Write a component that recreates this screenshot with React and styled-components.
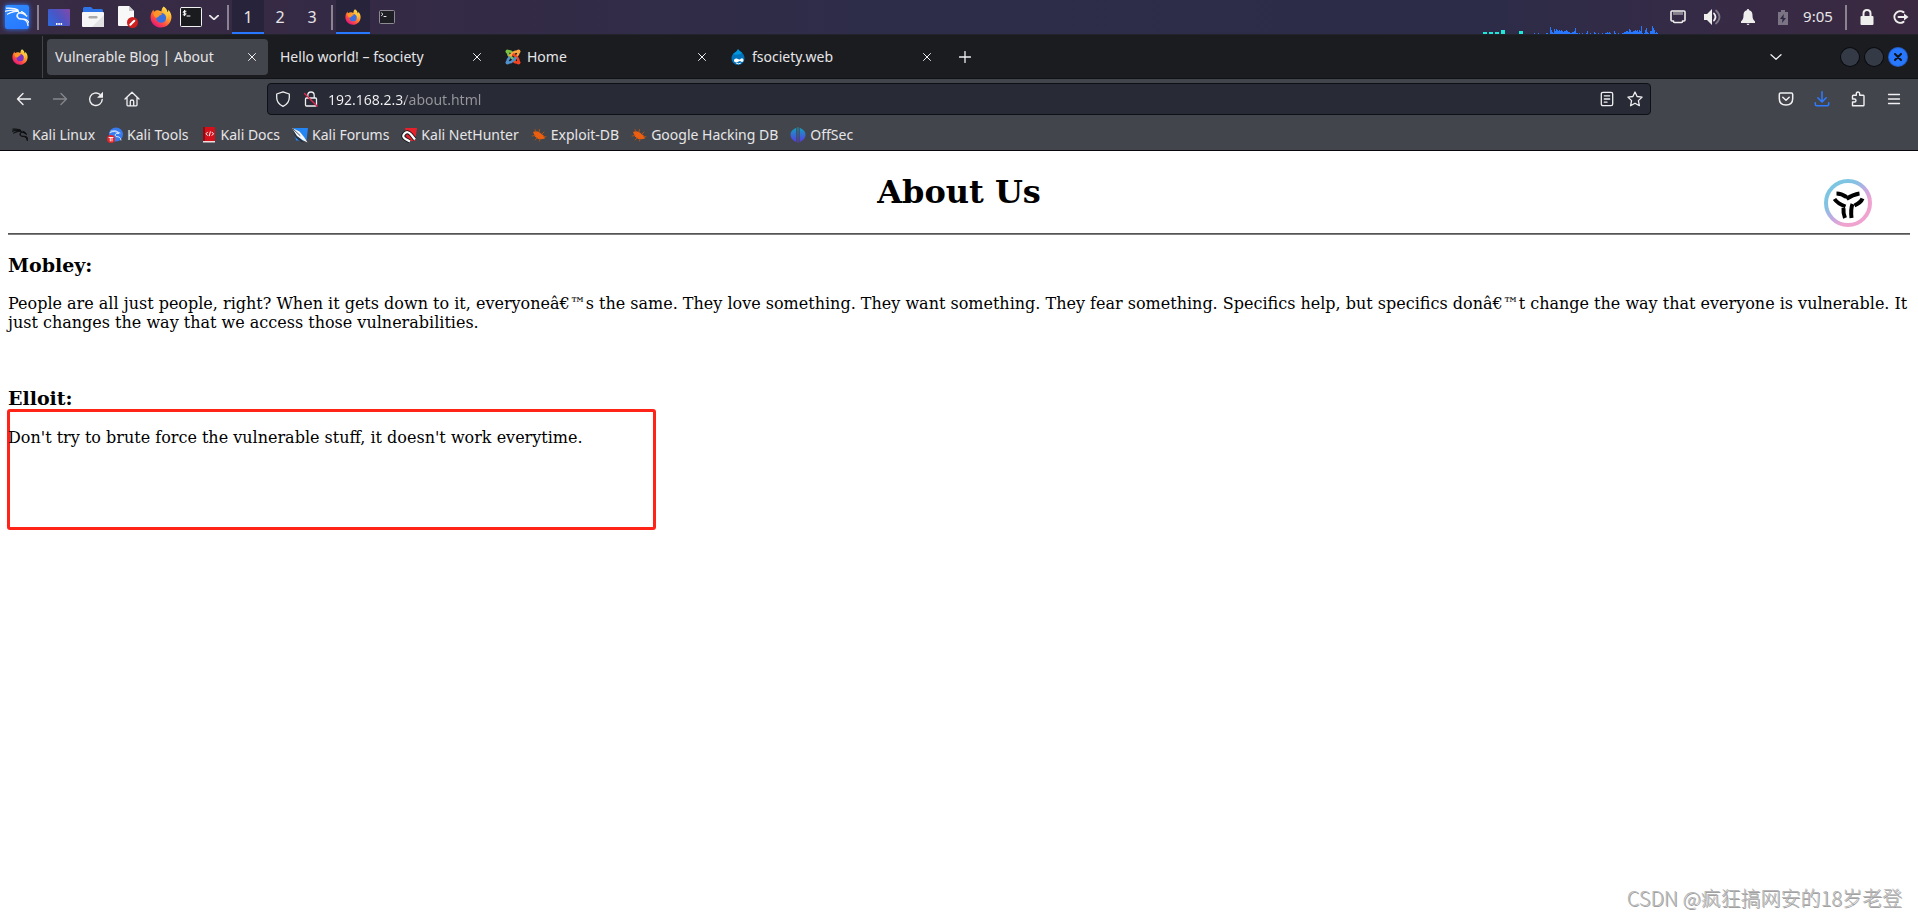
import styled, { createGlobalStyle } from 'styled-components';
import { SiKalilinux } from 'react-icons/si';

const GlobalStyle = createGlobalStyle`
  *, *::before, *::after {
    box-sizing: border-box;
  }
  body {
    margin: 0;
    background: #ffffff;
  }
  button {
    font: inherit;
    color: inherit;
    background: none;
    border: 0;
    padding: 0;
  }
`;

const Screen = styled.div`
  position: relative;
  display: flex;
  flex-direction: column;
  min-height: 100vh;
  font-family: 'Noto Sans', sans-serif;
  font-size: 14px;
  line-height: 20px;
  color: #e6e6e8;
`;

/* desktop panel */

const Panel = styled.header`
  display: flex;
  align-items: stretch;
  height: 35px;
  border-bottom: 1px solid #22232b;
  background: linear-gradient(90deg, #382b44 0%, #352a45 18%, #2d2d49 48%, #2d2c48 78%, #382a45 92%, #3a2940 100%);
`;

const PanelButton = styled.button`
  display: flex;
  align-items: center;
  justify-content: center;
  width: ${({ $width }) => $width || 34}px;
  font-size: 16px;
  background: ${({ $active }) => ($active ? '#27233a' : 'none')};
  box-shadow: ${({ $active }) => ($active ? 'inset 0 -2px 0 #2777ff' : 'none')};
`;

const MenuTile = styled.span`
  display: flex;
  align-items: center;
  justify-content: center;
  width: 24px;
  height: 24px;
  border-radius: 2px;
  color: #ffffff;
  background: linear-gradient(160deg, #2f8bff, #2777ff);
  box-shadow: 0 0 5px #2f7bff;
`;

const Separator = styled.span`
  width: 2px;
  margin: 5px 3px 4px;
  background: #8a8391;
`;

const Tray = styled.div`
  display: flex;
  margin-left: auto;
`;

const Clock = styled.time`
  width: 42px;
  padding-right: 6px;
  font-size: 15px;
  line-height: 33px;
  text-align: center;
`;

/* browser chrome */

const TabBar = styled.nav`
  display: flex;
  align-items: center;
  height: 44px;
  padding-top: 1px;
  border-bottom: 1px solid #111216;
  background: #1b1c20;
`;

const FirefoxView = styled.button`
  display: flex;
  align-items: center;
  align-self: stretch;
  width: 43px;
  padding-left: 12px;
  border-right: 1px solid #44454b;
`;

const TabList = styled.div`
  display: flex;
  gap: 4px;
  margin: 0 4px;
`;

const Tab = styled.div`
  display: flex;
  align-items: center;
  gap: 6px;
  width: 221px;
  height: 36px;
  padding: 0 6px 0 8px;
  border-radius: 4px;
  background: ${({ $active }) => ($active ? '#43454c' : 'none')};
`;

const TabTitle = styled.span`
  flex: 1;
  overflow: hidden;
  white-space: nowrap;
`;

const IconButton = styled.button`
  display: flex;
  flex: none;
  align-items: center;
  justify-content: center;
  width: ${({ $size }) => $size || 36}px;
  height: ${({ $size }) => $size || 36}px;
  color: ${({ $tone }) => $tone || '#f0f0f2'};
`;

const WindowControls = styled.div`
  display: flex;
  align-items: center;
  gap: 6px;
  margin-left: auto;
  padding-right: 11px;
`;

const AllTabs = styled(IconButton)`
  margin-right: 41px;
`;

const WindowButton = styled.button`
  display: flex;
  align-items: center;
  justify-content: center;
  width: 18px;
  height: 18px;
  border-radius: 50%;
  color: #10131c;
  background: ${({ $close }) => ($close ? '#2777ff' : '#343a46')};
  box-shadow: 0 0 0 1px ${({ $close }) => ($close ? '#2460cc' : '#0b0c0f')};
`;

const NavBar = styled.div`
  display: flex;
  align-items: center;
  height: 41px;
  padding: 0 6px 1px;
  background: #43454c;
`;

const UrlBar = styled.form`
  display: flex;
  flex: 1;
  align-items: center;
  height: 32px;
  margin: 0 117px;
  padding: 0 1px;
  border: 1px solid #0f1015;
  border-radius: 4px;
  background: #282a35;
`;

const UrlInput = styled.input`
  flex: 1;
  min-width: 0;
  height: 24px;
  padding: 0 0 0 3px;
  border: 0;
  outline: 0;
  font: inherit;
  color: transparent;
  background: linear-gradient(90deg, #f4f4f6 0 80px, #96979c 80px);
  background-clip: text;
`;

const Bookmarks = styled.nav`
  display: flex;
  align-items: center;
  gap: 12px;
  height: 31px;
  padding: 0 12px;
  border-bottom: 1px solid #08080a;
  background: #43454c;
`;

const Bookmark = styled.a`
  display: flex;
  align-items: center;
  gap: 4px;
  color: inherit;
  text-decoration: none;
  white-space: nowrap;
`;

/* page */

const Page = styled.main`
  position: relative;
  flex: 1;
  padding: 22px 8px;
  font-family: 'DejaVu Serif', serif;
  font-size: 16px;
  line-height: 19px;
  color: #000000;
`;

const PageTitle = styled.h1`
  margin: 0 0 22px;
  font-size: 32px;
  line-height: 38px;
  text-align: center;
`;

const Rule = styled.hr`
  margin: 0;
  border: 0;
  border-top: 1px solid #555555;
  border-bottom: 1px solid #808080;
`;

const Speaker = styled.h2`
  margin: 19px 0 0;
  font-size: 19px;
  line-height: 22px;
`;

const Quote = styled.p`
  margin: 18px 0 55px;
`;

const Marked = styled.div`
  width: 649px;
  max-width: 100%;
  min-height: 121px;
  margin-left: -1px;
  padding: 1px;
  border-radius: 3px;
  box-shadow: inset 0 0 0 3px #ff2318;
`;

const FloatingButton = styled.button`
  position: absolute;
  top: 28px;
  right: 46px;
  width: 48px;
  height: 48px;
`;

const Watermark = styled.span`
  position: absolute;
  right: 16px;
  bottom: 6px;
  font-family: 'Noto Sans CJK SC', sans-serif;
  font-size: 20px;
  font-weight: 300;
  line-height: 28px;
  color: #b8b8b8;
  text-shadow: 1px 1px 0 #a0a0a0;
`;

const Svg = ({ size = 16, width, height, box = '0 0 16 16', children }) => (
  <svg
    width={width || size}
    height={height || size}
    viewBox={box}
    fill="none"
    stroke="none"
    strokeLinecap="round"
    strokeLinejoin="round"
    aria-hidden="true"
  >
    {children}
  </svg>
);

const Line = ({ d, w = 1.3, ...rest }) => <path d={d} stroke="currentColor" strokeWidth={w} {...rest} />;

const FirefoxIcon = ({ id, size, core = '#3b6fe0' }) => (
  <Svg size={size} box="0 0 24 24">
    <defs>
      <linearGradient id={id} x1="20" y1="3" x2="6" y2="22" gradientUnits="userSpaceOnUse">
        <stop offset="0" stopColor="#ffe44d" />
        <stop offset="0.4" stopColor="#ff9a2e" />
        <stop offset="0.72" stopColor="#ff4a42" />
        <stop offset="1" stopColor="#e3187b" />
      </linearGradient>
    </defs>
    <path
      d="M15 .5C18 2.5 19 5 19 6.5c1-.3 1-1.500 .8-2.500C22.500 6.500 23.600 9.500 23.400 12.600 23 19 18 23.500 12 23.500S1 19 .6 13C.4 9.500 1.600 6.500 3.800 3.800c0 1 .2 1.800.7 2.400C6 5 8 4.500 9.500 4.800L12.500 6C12.500 4 13.300 2 15 .5Z"
      fill={`url(#${id})`}
    />
    <circle cx="12.200" cy="13" r="5.400" fill={core} />
    <path d="M4 7c2.500-1.500 4.500-.5 6 .6 1.200 0 3 .2 3.200 1-.3 1-1.600 1.400-3 1.800-.4 1.500-1.900 2-3.200 2.500C4.500 12 3.500 9.500 4 7Z" fill="#ff9526" />
    <path d="M14.500 7c3.500 1.500 4.600 5 3.200 8.500 2.800-3.500 2.300-7-.7-10.500Z" fill="#ffc83a" />
  </Svg>
);

const DesktopIcon = () => (
  <Svg width={22} height={17} box="0 0 22 17">
    <defs>
      <linearGradient id="desk" x1="0" y1="17" x2="22" y2="0" gradientUnits="userSpaceOnUse">
        <stop offset="0" stopColor="#2b6be0" />
        <stop offset="0.5" stopColor="#4a55c4" />
        <stop offset="1" stopColor="#8348a8" />
      </linearGradient>
    </defs>
    <rect width="22" height="17" rx="1" fill="url(#desk)" />
    <path d="M8 14h1.500v2H8zM10.300 14h1.500v2h-1.500zM12.600 14h1.500v2h-1.500z" fill="#fff" />
  </Svg>
);

const FolderIcon = () => (
  <Svg width={22} height={20} box="0 0 22 20">
    <path d="M1 1.500Q1 0 2.500 0H9l2 2h8.500Q21 2 21 3.500V8H1Z" fill="#2f74e6" />
    <rect y="5" width="22" height="15" rx="1" fill="#f6f6f6" />
    <path d="M22 8v12H10Z" fill="#e2e2e4" />
    <rect x="6.500" y="9" width="9" height="2.500" rx="1.200" fill="#a9a9ac" />
  </Svg>
);

const EditorIcon = () => (
  <Svg width={22} height={22} box="0 0 22 22">
    <path d="M2 1Q2 0 3 0h10l5 5v15H3q-1 0-1-1Z" fill="#f8f8f8" />
    <path d="M13 0v5h5Z" fill="#c9c9cc" />
    <circle cx="16.500" cy="16.500" r="5.500" fill="#d01f1f" />
    <path d="m14.300 18.800 4-4" stroke="#fff" strokeWidth="2" />
  </Svg>
);

const TerminalIcon = () => (
  <Svg width={22} height={20} box="0 0 22 20">
    <rect x=".5" y=".5" width="21" height="19" rx="1" fill="#191b1e" stroke="#f1f1f1" />
    <path d="M6 4.300H4.200Q3.200 4.300 3.200 5.200T4.200 6h.9Q6 6 6 6.900T5 7.800H3.200M4.600 3.300v5.400M7 9h3" stroke="#fff" strokeWidth="1" />
  </Svg>
);

const SmallTerminalIcon = () => (
  <Svg width={16} height={14} box="0 0 16 14">
    <rect x=".5" y=".5" width="15" height="13" rx="1" fill="#1d1f24" stroke="#8e8a94" />
    <path d="M2.500 3 4 4.300 2.500 5.600M5 6.500h2" stroke="#e8e8e8" strokeWidth="1" />
  </Svg>
);

const ChevronDown = ({ width, w }) => (
  <Svg width={width} height={width / 2} box="0 0 12 6">
    <Line d="M1 .8 6 5.200 11 .8" w={w} />
  </Svg>
);

const EthernetIcon = () => (
  <Svg width={16} height={14} box="0 0 16 14">
    <path d="M2 1h12q1 0 1 1v8q0 1-1 1h-1.500v.5q0 1-1 1h-7q-1 0-1-1V11H2q-1 0-1-1V2q0-1 1-1Z" stroke="#eeeeec" strokeWidth="1.600" />
    <path d="M4 2v2.500M6 2v2.500M8 2v2.500M10 2v2.500M12 2v2.500" stroke="#eeeeec" strokeWidth=".9" />
  </Svg>
);

const VolumeIcon = () => (
  <Svg width={18} height={16} box="0 0 18 16">
    <path d="M0 5h3l5-5v16l-5-5H0Z" fill="#eeeeec" />
    <path d="M10 4.500q3 3.500 0 7" stroke="#eeeeec" strokeWidth="1.800" />
    <path d="M12 1.500q7 6.500 0 13" stroke="#7d7687" strokeWidth="1.800" />
  </Svg>
);

const BellIcon = () => (
  <Svg width={14} height={16} box="0 0 14 16">
    <path d="M7 0q1.200 0 1.200 1.300C11 2 11.500 4 11.500 6.500c0 3 .8 4.500 2.500 6V14H0v-1.500c1.700-1.500 2.500-3 2.500-6C2.500 4 3 2 5.800 1.300 5.800 0 7 0 7 0ZM5.500 14.700h3Q8 16 7 16t-1.500-1.300Z" fill="#eeeeec" />
  </Svg>
);

const BatteryIcon = () => (
  <Svg width={10} height={15} box="0 0 10 15">
    <path d="M0 2h3V0h4v2h3v13H0Z" fill="#7b7484" />
    <path d="M5.800 4 2 9h2.500L4 13l4-5H5.500Z" fill="#2f2843" />
  </Svg>
);

const LockIcon = () => (
  <Svg width={14} height={16} box="0 0 14 16">
    <path d="M3.500 8V4.500Q3.500 1 7 1t3.500 3.500V8" stroke="#eeeeec" strokeWidth="2" />
    <rect x=".5" y="7" width="13" height="9" rx="1" fill="#eeeeec" />
  </Svg>
);

const LogoutIcon = () => (
  <Svg width={16} height={14} box="0 0 16 14">
    <path d="M10.500 2.200A5.800 5.800 0 1 0 10.500 11.800" stroke="#eeeeec" strokeWidth="2" />
    <path d="M5.500 7H12" stroke="#eeeeec" strokeWidth="2" />
    <path d="m11 3.500 4.500 3.500L11 10.500Z" fill="#eeeeec" />
  </Svg>
);

const CPU_BARS = [
  [0, 2], [6, 2], [12, 2], [18, 4], [36, 3],
];
const NET_BARS = [
  1, 0, 0, 0, 1, 0, 0, 0, 0, 0, 0, 0, 1, 1, 0, 0, 7, 4, 2, 1, 5, 3, 5, 4, 3, 4, 3, 4, 3, 2, 3, 3, 4, 3, 2, 2, 1, 1,
  2, 2, 3, 6, 1, 1, 0, 1, 0, 0, 1, 0, 0, 0, 1, 3, 0, 0, 1, 0, 0, 0, 2, 1, 0, 0, 1, 0, 0, 0, 1, 0, 0, 1, 1, 2, 1, 2,
  1, 0, 0, 0, 3, 1, 0, 0, 1, 0, 0, 0, 1, 1, 2, 2, 3, 3, 2, 5, 4, 2, 2, 3, 3, 4, 3, 4, 2, 4, 3, 8, 1, 0, 1, 4, 6, 2,
  1, 0, 3, 3, 8, 6, 4, 1, 2, 1,
];

const LoadGraph = () => (
  <Svg width={177} height={34} box="0 0 177 34">
    {CPU_BARS.map(([x, h]) => (
      <rect key={x} x={x} y={34 - h} width="4" height={h} fill="#1ee8d8" />
    ))}
    {NET_BARS.map((h, i) => (
      <rect key={i} x={51 + i} y={34 - h} width="1" height={h} fill="#2777ff" />
    ))}
  </Svg>
);

const CloseIcon = () => (
  <Svg size={10} box="0 0 10 10">
    <Line d="m1.500 1.500 7 7M8.500 1.500l-7 7" w={1} />
  </Svg>
);

const JoomlaIcon = () => (
  <Svg>
    <g strokeWidth="2.500">
      <path d="M2.500 2.500 3.500 6 9.500 11" stroke="#7ac143" />
      <path d="M2.500 2.500Q6 1.500 8 5" stroke="#7ac143" />
      <path d="M13.500 2.500Q10 2 7.500 4.500L5 7" stroke="#f9a541" />
      <path d="M13.500 2.500Q14 5 11.500 7.500" stroke="#f9a541" />
      <path d="M13.500 13.500Q14 10.500 11.500 8L8.500 5.500" stroke="#f44321" />
      <path d="M13.500 13.500Q10.500 14 8.500 12" stroke="#f44321" />
      <path d="M2.500 13.500Q6 14 8 11.500L10.500 9" stroke="#5091cd" />
      <path d="M2.500 13.500Q2 11 4.500 8.500" stroke="#5091cd" />
    </g>
    <circle cx="2.500" cy="2.500" r="2" fill="#7ac143" />
    <circle cx="13.500" cy="2.500" r="2" fill="#f9a541" />
    <circle cx="13.500" cy="13.500" r="2" fill="#f44321" />
    <circle cx="2.500" cy="13.500" r="2" fill="#5091cd" />
  </Svg>
);

const DrupalIcon = () => (
  <Svg>
    <path d="M8 0c1 2 3 2.500 4.500 4.200C14 6 14.500 7.500 14.500 9.300A6.500 6.500 0 0 1 8 16 6.500 6.500 0 0 1 1.500 9.300C1.500 7 2.500 5.300 4.200 4 6 2.800 7.500 2 8 0Z" fill="#0073ba" />
    <path d="M8 0c1 2 3 2.500 4 3.700C10 6 5 6 3 5.200 5 3 7.500 2.500 8 0Z" fill="#0096dc" />
    <path d="M4 11.500C4 9.500 6 9 7.300 9.700 8.800 10.500 9.500 11 10.500 10c1.300-1.300 3-.5 3 1.200 0 1.600-1.500 2.200-2.600 1.300-1.100-.8-1.600-.6-2.700.3C6.500 14 4 13.500 4 11.500Z" fill="#fff" />
    <path d="M6.500 14.400q2 1 4-.1" stroke="#fff" strokeWidth=".9" />
  </Svg>
);

const BackIcon = () => (
  <Svg>
    <Line d="M1.500 8h13M7 2.500 1.500 8 7 13.500" w={1.400} />
  </Svg>
);

const ForwardIcon = () => (
  <Svg>
    <Line d="M1.500 8h13M9 2.500 14.500 8 9 13.500" w={1.400} />
  </Svg>
);

const ReloadIcon = () => (
  <Svg>
    <Line d="M14.200 8.500A6.300 6.300 0 1 1 11.800 3.300" w={1.400} />
    <path d="M15 .8v6H9Z" fill="currentColor" />
  </Svg>
);

const HomeIcon = () => (
  <Svg>
    <Line d="M1 8 8 1.200 15 8M3 6.500V14q0 .8.800.8h8.400q.8 0 .8-.8V6.500M6.300 14.500V10.300Q6.300 9 8 9t1.700 1.300v4.200" />
  </Svg>
);

const ShieldIcon = () => (
  <Svg>
    <Line d="M8 .8 14.300 3V6.500Q14.300 12.500 8 15.300 1.700 12.500 1.700 6.500V3Z" />
  </Svg>
);

const InsecureIcon = () => (
  <Svg>
    <Line d="M4.800 7V4.300Q4.800 1 8 1t3.200 3.300V7M3.500 7h9q1 0 1 1v6q0 1-1 1h-9q-1 0-1-1V8q0-1 1-1Z" />
    <path d="m1.500 2.500 12.500 12.500" stroke="#e22850" strokeWidth="1.400" />
  </Svg>
);

const ReaderIcon = () => (
  <Svg>
    <Line d="M4 1.300h8q1.700 0 1.700 1.700v10q0 1.700-1.700 1.700H4Q2.300 14.700 2.300 13V3Q2.300 1.300 4 1.300ZM5.300 4.800h5.400M5.300 8h5.400M5.300 11.200h2.700" />
  </Svg>
);

const StarIcon = () => (
  <Svg>
    <Line d="m8 1 2.100 4.500 5 .6-3.700 3.500 1 5.100L8 12.200l-4.400 2.500 1-5.100L.9 6.100l5-.6Z" />
  </Svg>
);

const PocketIcon = () => (
  <Svg>
    <Line d="M2.700 2h10.600q1.400 0 1.400 1.400V7.500Q14.700 14 8 14T1.300 7.500V3.400Q1.300 2 2.700 2ZM4.800 6.300 8 9.300l3.200-3" w={1.500} />
  </Svg>
);

const DownloadIcon = () => (
  <Svg>
    <Line d="M8 .8v10M3.800 6.800 8 11l4.200-4.200M1.300 11.800v1.500q0 1.500 1.500 1.500h10.400q1.500 0 1.500-1.500v-1.500" w={1.500} />
  </Svg>
);

const ExtensionIcon = () => (
  <Svg>
    <Line d="M2.500 14.700V11H4.300Q6 11 6 9.500T4.300 8H2.500V5q0-.8.800-.8H6.300V2.800Q6.300 1 8 1t1.700 1.800v1.400h3.500q.8 0 .8.800v8.900q0 .8-.8.800Z" w={1.400} />
  </Svg>
);

const MenuIcon = () => (
  <Svg>
    <Line d="M2.500 3.500h11M2.500 8h11M2.500 12.500h11" />
  </Svg>
);

const KaliToolsIcon = () => (
  <Svg>
    <circle cx="9" cy="7.500" r="7" fill="#367bf0" />
    <path d="M3 5.500q5-2.500 9 1-4-.5-4 1.500t4 2q2 1 2 3M4 4q5-1.500 9 2" stroke="#dfeaff" strokeWidth=".9" />
    <circle cx="4" cy="12" r="4" fill="#e0262b" />
    <path d="M2 10.500h4M3.300 10.500v3.500M5 10.500v3.500" stroke="#fff" strokeWidth=".9" />
  </Svg>
);

const KaliDocsIcon = () => (
  <Svg>
    <path d="M2 0h12v14H2Z" fill="#d4101b" />
    <path d="M2 0h2v14H2Z" fill="#8d0b12" />
    <path d="M2 14h12v1.500H2Z" fill="#f0dede" />
    <path d="M6.500 5.200 5 6.800l1.500 1.600M11 5.200l1.500 1.600L11 8.400M9.300 4.800l-1 4" stroke="#fff" strokeWidth="1" />
  </Svg>
);

const KaliForumsIcon = () => (
  <Svg>
    <path d="M2 1h14l-1.500 12.500H4Z" fill="#2486f5" />
    <path d="M0 1 5.500 9l4.500 4 2 3Q5 13 3 9Z" fill="#26303e" />
    <path d="M0 1 7.500 4.500 12 10l3.500 5.500-5-2.500L5 9Z" fill="#f5f7fa" />
    <path d="M1 2 8 8.500" stroke="#26303e" strokeWidth=".8" />
  </Svg>
);

const NetHunterIcon = () => (
  <Svg>
    <path d="M4 1h12l-2 13H6Z" fill="#e6212c" />
    <path d="M9 14.500 4.500 12Q.5 9.500 3.500 6.500T10 7.500l4 5" stroke="#17181c" strokeWidth="4" strokeLinecap="butt" />
    <path d="M9 14.500 4.500 12Q.5 9.500 3.500 6.500T10 7.500l4 5" stroke="#fff" strokeWidth="2.200" strokeLinecap="butt" />
  </Svg>
);

const BugIcon = () => (
  <Svg>
    <path d="M2 5Q5 3.500 8 5l4.500 3.500 1.500 3-3.500.8Q6.500 12.500 4 9.500Z" fill="#ec5e10" />
    <path d="M5 5 4 2.500M8 5l.5-2.500M11 7l2-2M4 8.500l-3 .5M6 11l-2 2M9 12l-.5 2M12.500 9.500l2.500.3" stroke="#b9530f" strokeWidth=".9" />
  </Svg>
);

const OffSecIcon = () => (
  <Svg>
    <defs>
      <linearGradient id="offsec" x1="8" y1="0" x2="8" y2="16" gradientUnits="userSpaceOnUse">
        <stop offset="0" stopColor="#0ea5c0" />
        <stop offset="1" stopColor="#5b35e6" />
      </linearGradient>
    </defs>
    <path d="M6.300.8v14.400L4.500 14Q.5 11.500.5 7.500T6.300.8ZM7.500.3h1v15.400h-1ZM9.700.8Q15.500 3.500 15.500 7.500T11.500 14l-1.800 1.200Z" fill="url(#offsec)" />
  </Svg>
);

const KaliLinuxIcon = () => (
  <SiKalilinux size={16} color="#0d0e10" stroke="#0d0e10" strokeWidth="1.100" aria-hidden="true" />
);

const AssistantLogo = () => (
  <Svg size={48} box="0 0 48 48">
    <defs>
      <linearGradient id="ring" x1="10" y1="8" x2="38" y2="40" gradientUnits="userSpaceOnUse">
        <stop offset="0" stopColor="#7cc6e2" />
        <stop offset="0.25" stopColor="#86c0e4" />
        <stop offset="0.55" stopColor="#c6a8e2" />
        <stop offset="0.8" stopColor="#f0a3cf" />
      </linearGradient>
    </defs>
    <circle cx="24" cy="24" r="22" fill="#fff" stroke="url(#ring)" strokeWidth="4" />
    <g stroke="#000" strokeWidth="4" strokeLinecap="butt">
      <path d="M12.500 14.500q5 0 10 3.500M35.500 14.500q-6.500.8-13 5.500M10.500 20q3 4.500 11 7.500M38.500 19.500q-1.500 4-8 7M19.500 29q-.5 5 1.500 10M28.500 25q-2 5-1 14" />
    </g>
  </Svg>
);

const TABS = [
  { title: 'Vulnerable Blog | About', active: true },
  { title: 'Hello world! – fsociety' },
  { title: 'Home', Icon: JoomlaIcon },
  { title: 'fsociety.web', Icon: DrupalIcon },
];

const BOOKMARKS = [
  { title: 'Kali Linux', Icon: KaliLinuxIcon },
  { title: 'Kali Tools', Icon: KaliToolsIcon },
  { title: 'Kali Docs', Icon: KaliDocsIcon },
  { title: 'Kali Forums', Icon: KaliForumsIcon },
  { title: 'Kali NetHunter', Icon: NetHunterIcon },
  { title: 'Exploit-DB', Icon: BugIcon },
  { title: 'Google Hacking DB', Icon: BugIcon },
  { title: 'OffSec', Icon: OffSecIcon },
];

const DesktopPanel = () => (
  <Panel>
    <PanelButton aria-label="Applications">
      <MenuTile>
        <SiKalilinux size={24} stroke="#ffffff" strokeWidth="0.800" />
      </MenuTile>
    </PanelButton>
    <Separator />
    <PanelButton aria-label="Show desktop"><DesktopIcon /></PanelButton>
    <PanelButton aria-label="Files"><FolderIcon /></PanelButton>
    <PanelButton aria-label="Text editor"><EditorIcon /></PanelButton>
    <PanelButton aria-label="Firefox"><FirefoxIcon id="fxLaunch" size={22} /></PanelButton>
    <PanelButton $width={26} aria-label="Terminal"><TerminalIcon /></PanelButton>
    <PanelButton $width={20} aria-label="More terminals"><ChevronDown width={10} w={2.200} /></PanelButton>
    <Separator />
    <PanelButton $width={32} $active>1</PanelButton>
    <PanelButton $width={32}>2</PanelButton>
    <PanelButton $width={32}>3</PanelButton>
    <Separator />
    <PanelButton $active aria-label="Firefox window"><FirefoxIcon id="fxTask" size={16} /></PanelButton>
    <PanelButton aria-label="Terminal window"><SmallTerminalIcon /></PanelButton>
    <Tray>
      <LoadGraph />
      <PanelButton $width={35} aria-label="Network"><EthernetIcon /></PanelButton>
      <PanelButton $width={35} aria-label="Volume"><VolumeIcon /></PanelButton>
      <PanelButton $width={35} aria-label="Notifications"><BellIcon /></PanelButton>
      <PanelButton $width={35} aria-label="Battery"><BatteryIcon /></PanelButton>
      <Clock>9:05</Clock>
      <Separator />
      <PanelButton aria-label="Lock screen"><LockIcon /></PanelButton>
      <PanelButton aria-label="Log out"><LogoutIcon /></PanelButton>
    </Tray>
  </Panel>
);

const BrowserTabs = () => (
  <TabBar>
    <FirefoxView aria-label="Firefox View"><FirefoxIcon id="fxView" size={16} core="#7a35c8" /></FirefoxView>
    <TabList>
      {TABS.map(({ title, active, Icon }) => (
        <Tab key={title} $active={active}>
          {Icon && <Icon />}
          <TabTitle>{title}</TabTitle>
          <IconButton $size={20} aria-label={`Close ${title}`}><CloseIcon /></IconButton>
        </Tab>
      ))}
    </TabList>
    <IconButton aria-label="New tab">
      <Svg size={12} box="0 0 12 12"><Line d="M6 .5v11M.5 6h11" /></Svg>
    </IconButton>
    <WindowControls>
      <AllTabs aria-label="List all tabs"><ChevronDown width={12} w={1.300} /></AllTabs>
      <WindowButton aria-label="Minimize" />
      <WindowButton aria-label="Maximize" />
      <WindowButton $close aria-label="Close window">
        <Svg size={8} box="0 0 8 8"><Line d="m1 1 6 6M7 1 1 7" w={2} /></Svg>
      </WindowButton>
    </WindowControls>
  </TabBar>
);

const BrowserNav = () => (
  <NavBar>
    <IconButton aria-label="Back"><BackIcon /></IconButton>
    <IconButton $tone="#85868b" aria-label="Forward"><ForwardIcon /></IconButton>
    <IconButton aria-label="Reload"><ReloadIcon /></IconButton>
    <IconButton aria-label="Home"><HomeIcon /></IconButton>
    <UrlBar onSubmit={(e) => e.preventDefault()}>
      <IconButton type="button" $size={28} aria-label="Tracking protection"><ShieldIcon /></IconButton>
      <IconButton type="button" $size={28} aria-label="Connection not secure"><InsecureIcon /></IconButton>
      <UrlInput aria-label="Address" defaultValue="192.168.2.3/about.html" spellCheck="false" />
      <IconButton type="button" $size={28} aria-label="Reader view"><ReaderIcon /></IconButton>
      <IconButton type="button" $size={28} aria-label="Bookmark this page"><StarIcon /></IconButton>
    </UrlBar>
    <IconButton aria-label="Save to Pocket"><PocketIcon /></IconButton>
    <IconButton $tone="#2f7bff" aria-label="Downloads"><DownloadIcon /></IconButton>
    <IconButton aria-label="Extensions"><ExtensionIcon /></IconButton>
    <IconButton aria-label="Menu"><MenuIcon /></IconButton>
  </NavBar>
);

const AboutPage = () => (
  <Page>
    <PageTitle>About Us</PageTitle>
    <Rule />
    <Speaker>Mobley:</Speaker>
    <Quote>
      People are all just people, right? When it gets down to it, everyoneâ€™s the same. They love something. They want
      something. They fear something. Specifics help, but specifics donâ€™t change the way that everyone is vulnerable.
      It just changes the way that we access those vulnerabilities.
    </Quote>
    <Speaker>Elloit:</Speaker>
    <Marked>
      <Quote>Don't try to brute force the vulnerable stuff, it doesn't work everytime.</Quote>
    </Marked>
    <FloatingButton aria-label="Assistant"><AssistantLogo /></FloatingButton>
  </Page>
);

function App() {
  return (
    <Screen>
      <GlobalStyle />
      <DesktopPanel />
      <BrowserTabs />
      <BrowserNav />
      <Bookmarks aria-label="Bookmarks">
        {BOOKMARKS.map(({ title, Icon }) => (
          <Bookmark key={title} href="#">
            <Icon />
            {title}
          </Bookmark>
        ))}
      </Bookmarks>
      <AboutPage />
      <Watermark>CSDN @疯狂搞网安的18岁老登</Watermark>
    </Screen>
  );
}

export default App;
